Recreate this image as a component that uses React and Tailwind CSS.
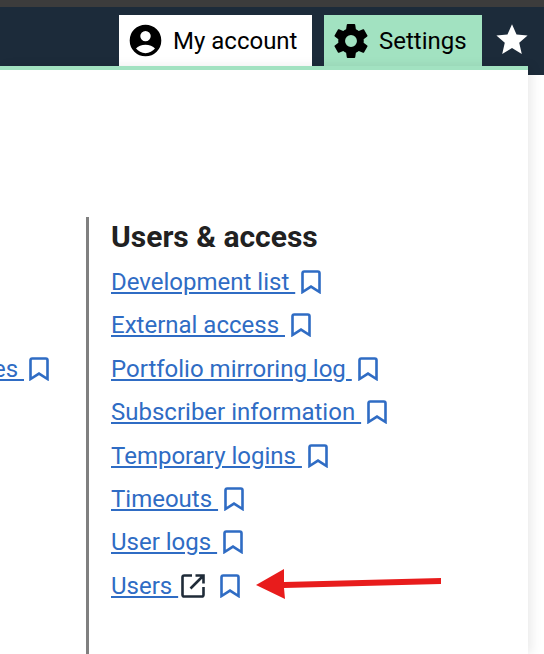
import React from "react";

const links = [
  "Development list",
  "External access",
  "Portfolio mirroring log",
  "Subscriber information",
  "Temporary logins",
  "Timeouts",
  "User logs",
];

const Bookmark = ({ className = "" }) => (
  <svg viewBox="0 0 20 24" className={"w-[20px] h-[24px] shrink-0 " + className} fill="none" stroke="#2f6cc4" strokeWidth="2.6">
    <path d="M1.5 22V3.2Q1.5 1.5 3.2 1.5H16.8Q18.5 1.5 18.5 3.2V22L10 16.6Z" />
  </svg>
);

const ExternalIcon = () => (
  <svg viewBox="0 0 24 24" className="w-[24px] h-[24px] shrink-0" fill="none" stroke="#1f2b38" strokeWidth="2.6">
    <path d="M11 1.500H3.300Q1.500 1.500 1.500 3.300V20.700Q1.500 22.500 3.300 22.500H20.700Q22.500 22.500 22.500 20.700V13" />
    <path d="M14.500 1.500H22.500V9.500M22 2L9.500 14.500" />
  </svg>
);

const LinkRow = ({ label, children }) => (
  <div className="flex items-center h-[43.4px]">
    <a href="#" className="text-[24px] leading-[30px] text-[#2f6cc4] underline whitespace-pre">
      {label + " "}
    </a>
    {children}
  </div>
);

export default function App() {
  return (
    <div className="relative w-[544px] h-[654px] overflow-hidden bg-white font-['Roboto',sans-serif]">
      <div className="h-[7px] bg-[#3c3c3c]" />
      <div className="h-[68px] bg-[#1c2b3a] flex items-start pt-[8px] pl-[119px]">
        <div className="w-[193px] h-[51px] bg-white flex items-center pl-[10px] gap-[11px]">
          <svg viewBox="0 0 24 24" className="w-[33px] h-[33px] shrink-0" fill="black">
            <path fillRule="evenodd" d="M12 .5a11.500 11.500 0 1 0 0 23 11.500 11.500 0 0 0 0-23ZM12 5a3.800 3.800 0 1 1 0 7.600A3.800 3.800 0 0 1 12 5Zm0 16.200c-2.800 0-5.300-1.300-6.900-3.300 1.300-1.700 4.200-2.800 6.900-2.800s5.600 1.100 6.900 2.800c-1.600 2-4.100 3.300-6.900 3.300Z" />
          </svg>
          <span className="text-[24px] leading-none text-black">My account</span>
        </div>
        <div className="ml-[12px] w-[158px] h-[51px] bg-[#a2e2c1] flex items-center pl-[10px] gap-[11px]">
          <svg viewBox="2 2 20 20" className="w-[34px] h-[34px] shrink-0" fill="black">
            <path d="M19.430 12.980c.040-.320.070-.640.070-.980s-.030-.660-.070-.980l2.110-1.650c.190-.150.240-.420.120-.640l-2-3.460c-.120-.220-.390-.300-.610-.220l-2.490 1c-.520-.400-1.080-.730-1.690-.980l-.380-2.650A.488.488 0 0 0 14 2h-4c-.250 0-.460.180-.490.420l-.380 2.650c-.610.250-1.170.590-1.690.980l-2.490-1c-.230-.090-.490 0-.610.220l-2 3.460c-.130.220-.070.490.120.640l2.110 1.650c-.040.320-.070.650-.070.980s.030.660.070.980l-2.110 1.650c-.190.150-.240.420-.120.640l2 3.460c.120.220.390.300.610.220l2.490-1c.520.400 1.080.730 1.690.980l.380 2.650c.030.240.240.420.490.420h4c.250 0 .460-.180.490-.420l.380-2.650c.610-.250 1.170-.590 1.690-.980l2.490 1c.230.090.490 0 .610-.220l2-3.460c.120-.220.070-.490-.120-.640l-2.110-1.650ZM12 15.500a3.500 3.500 0 1 1 0-7 3.500 3.500 0 0 1 0 7Z" />
          </svg>
          <span className="text-[24px] leading-none text-black">Settings</span>
        </div>
        <svg viewBox="0 0 24 24" className="ml-[13px] mt-[7px] w-[34px] h-[34px] shrink-0" fill="white">
          <path d="M12 1.500l3.200 7.300 7.800.7-5.900 5.200 1.800 7.800L12 18.400l-6.900 4.100 1.800-7.800L1 9.500l7.800-.7Z" />
        </svg>
      </div>
      <div className="absolute left-0 top-[66px] w-[528px] h-[588px] bg-white border-t-[4px] border-[#a2e2c1] shadow-[4px_0_10px_rgba(0,0,0,0.08)]">
        <div className="flex pt-[147px]">
          <div className="w-[86px] pt-[130.4px] overflow-hidden flex justify-end">
            <div className="flex items-center justify-end h-[43.4px] w-[86px] pr-[37px]">
              <a href="#" className="text-[24px] leading-[30px] text-[#2f6cc4] underline whitespace-pre">{"Licenses "}</a>
              <Bookmark className="ml-[5px]" />
            </div>
          </div>
          <div className="w-[3px] h-[437px] bg-[#808080]" />
          <div className="pl-[22px]">
            <h2 className="text-[30px] leading-[40px] font-bold text-[#212121] mb-[3.4px]">Users &amp; access</h2>
            {links.map((label) => (
              <LinkRow key={label} label={label}>
                <Bookmark className="ml-[6px]" />
              </LinkRow>
            ))}
            <LinkRow label="Users">
              <span className="ml-[3px]"><ExternalIcon /></span>
              <Bookmark className="ml-[15px]" />
            </LinkRow>
          </div>
        </div>
      </div>
      <svg viewBox="0 0 186 32" className="absolute left-[256px] top-[569px] w-[186px] h-[32px]" fill="#e81c1c">
        <path d="M0 16 L28 0 L28 13 L185 9 L185 15 L28 19 L29 30Z" />
      </svg>
    </div>
  );
}
